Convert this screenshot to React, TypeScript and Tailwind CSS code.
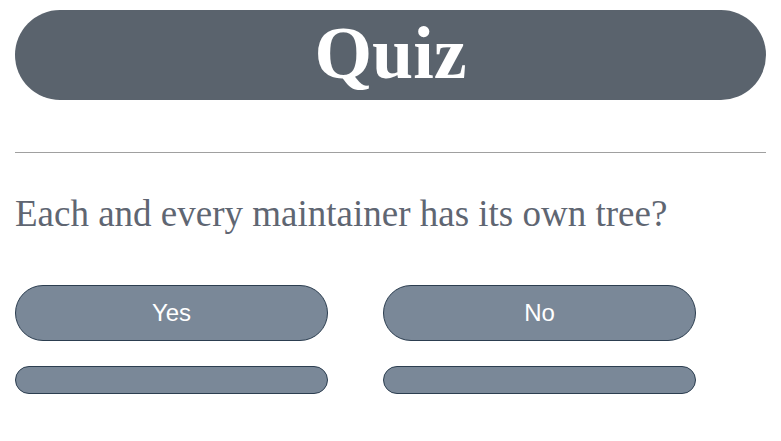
const options = ["Yes", "No"];

export default function App() {
  return (
    <div className="w-[781px] h-[441px] bg-white px-[15px] pt-[10px]">
      {/* Title */}
      <div className="h-[90px] rounded-[45px] bg-[#5a636d] flex items-center justify-center">
        <h1 className="text-white font-bold text-[74px] leading-none font-['Liberation_Serif',serif] pb-[4px]">
          Quiz
        </h1>
      </div>

      <hr className="mt-[52px] border-t border-[#a0a0a0]" />

      {/* Question */}
      <p className="mt-[38px] text-[37px] leading-[46px] text-[#5f6672] font-['Liberation_Serif',serif]">
        Each and every maintainer has its own tree?
      </p>

      {/* Answers */}
      <div className="mt-[48px] flex gap-[55px]">
        {options.map((o) => (
          <button
            key={o}
            className="w-[313px] h-[56px] rounded-[28px] bg-[#7a8898] border border-[#2c3e50] text-white text-[24px] font-['Liberation_Sans',sans-serif]"
          >
            {o}
          </button>
        ))}
      </div>
      <div className="mt-[25px] flex gap-[55px]">
        {options.map((o) => (
          <div
            key={o}
            className="w-[313px] h-[28px] rounded-[14px] bg-[#7a8898] border border-[#2c3e50]"
          />
        ))}
      </div>
    </div>
  );
}
